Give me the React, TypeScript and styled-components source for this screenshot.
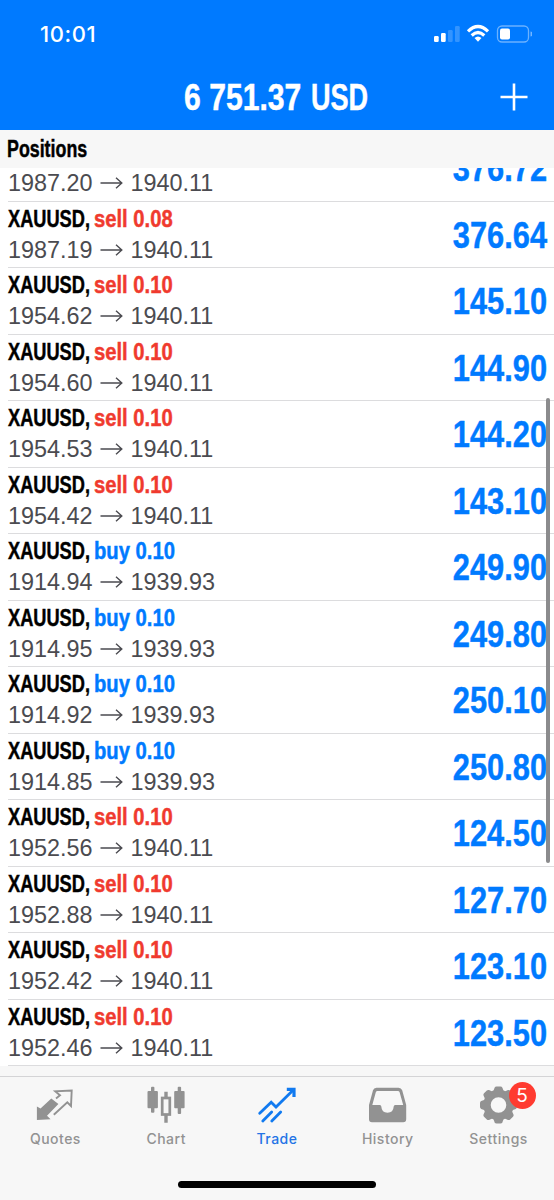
import React from "react";
import styled, { createGlobalStyle } from "styled-components";

const BLUE = "#007aff";
const RED = "#f03a2e";
const GREY = "#929292";

const GlobalStyle = createGlobalStyle`
  * { box-sizing: border-box; }
  body { margin: 0; background: #fff; }
`;

const Screen = styled.div`
  width: 554px;
  height: 1200px;
  display: flex;
  flex-direction: column;
  overflow: hidden;
  background: #fff;
`;

const Header = styled.header`
  height: 130px;
  flex: none;
  background: ${BLUE};
  color: #fff;
`;

const StatusBar = styled.div`
  height: 66px;
  display: flex;
  justify-content: space-between;
  padding: 22px 22px 0 40px;
`;

const Clock = styled.span`
  font: 500 22px/25px Inter, sans-serif;
  letter-spacing: 0.6px;
`;

const StatusIcons = styled.svg`
  display: block;
  margin-top: 2px;
`;

/* Bold sans text squeezed horizontally; $width is the room kept for it in the flow. */
const Condensed = styled.span<{ $scale: number; $width: number; $origin?: string }>`
  display: block;
  width: ${(p) => p.$width}px;
  direction: ${(p) => (p.$origin === "right" ? "rtl" : "ltr")};
  font-family: "Liberation Sans", sans-serif;
  font-weight: 700;
  white-space: nowrap;
  transform: scaleX(${(p) => p.$scale});
  transform-origin: ${(p) => p.$origin ?? "left"} center;
  -webkit-text-stroke: 0.45px currentColor;
`;

const TitleBar = styled.div`
  height: 64px;
  display: grid;
  grid-template-columns: 60px 1fr 60px;
  align-items: center;
  padding: 0 10px;
`;

const Balance = styled.h1`
  grid-column: 2;
  display: flex;
  justify-content: center;
  margin: 0;
  font-size: 36px;
  line-height: 64px;
`;

const AddButton = styled.button`
  display: flex;
  justify-content: center;
  padding: 0 0 2px;
  border: 0;
  background: none;
`;

const SectionTitle = styled.h2`
  height: 38px;
  flex: none;
  margin: 0;
  padding-left: 7px;
  background: #f7f7f7;
  color: #000;
  font-size: 23.5px;
  line-height: 38px;
`;

const Viewport = styled.main`
  position: relative;
  height: 908px;
  flex: none;
  overflow: hidden;
`;

const List = styled.div`
  margin-top: -33px;
`;

const Row = styled.div`
  height: 66.5px;
  margin-left: 8px;
  padding-right: 7px;
  display: flex;
  justify-content: space-between;
  border-bottom: 1px solid #dcdcde;
`;

const Details = styled.div`
  padding-top: 2px;
`;

const Order = styled.div<{ $side: string }>`
  display: flex;
  color: ${(p) => (p.$side === "buy" ? BLUE : RED)};
  font-size: 23.5px;
  line-height: 30px;
`;

const Prices = styled.div`
  display: flex;
  align-items: center;
  color: #4b4b50;
  font: 400 23.4px/32px "Liberation Sans", sans-serif;
`;

const ArrowIcon = styled.svg`
  margin: 0 8px 0 7px;
`;

const Profit = styled.div`
  color: ${BLUE};
  font-size: 36px;
  line-height: 67px;
`;

const NextSection = styled.div`
  height: 12px;
  background: #f7f7f7;
`;

const ScrollThumb = styled.div`
  position: absolute;
  right: 4px;
  top: 230px;
  width: 4px;
  height: 465px;
  border-radius: 2px;
  background: #8b8b8d;
`;

const TabBar = styled.nav`
  height: 124px;
  flex: none;
  display: flex;
  flex-direction: column;
  align-items: center;
  background: #f7f7f7;
  border-top: 1px solid #d4d4d6;
`;

const Tabs = styled.div`
  width: 100%;
  height: 104px;
  display: grid;
  grid-template-columns: repeat(5, 1fr);
`;

const Tab = styled.div<{ $active?: boolean }>`
  display: flex;
  flex-direction: column;
  align-items: center;
  padding-top: 8px;
  color: ${(p) => (p.$active ? "#2474e6" : GREY)};
  font: 500 14px/20px Inter, sans-serif;
  letter-spacing: 0.5px;
`;

const IconBox = styled.div`
  position: relative;
  width: 40px;
  height: 40px;
  margin-bottom: 4px;

  svg { display: block; }
`;

const Badge = styled.span`
  position: absolute;
  left: 30px;
  top: -3.5px;
  width: 27px;
  height: 27px;
  border-radius: 50%;
  background: #ff3b30;
  color: #fff;
  text-align: center;
  font: 400 19px/27px Inter, sans-serif;
  letter-spacing: 0;
`;

const HomeIndicator = styled.div`
  width: 198px;
  height: 7px;
  border-radius: 4px;
  background: #000;
`;

const positions = [
  ["sell 0.08", "1987.20", "1940.11", "376.72"],
  ["sell 0.08", "1987.19", "1940.11", "376.64"],
  ["sell 0.10", "1954.62", "1940.11", "145.10"],
  ["sell 0.10", "1954.60", "1940.11", "144.90"],
  ["sell 0.10", "1954.53", "1940.11", "144.20"],
  ["sell 0.10", "1954.42", "1940.11", "143.10"],
  ["buy 0.10", "1914.94", "1939.93", "249.90"],
  ["buy 0.10", "1914.95", "1939.93", "249.80"],
  ["buy 0.10", "1914.92", "1939.93", "250.10"],
  ["buy 0.10", "1914.85", "1939.93", "250.80"],
  ["sell 0.10", "1952.56", "1940.11", "124.50"],
  ["sell 0.10", "1952.88", "1940.11", "127.70"],
  ["sell 0.10", "1952.42", "1940.11", "123.10"],
  ["sell 0.10", "1952.46", "1940.11", "123.50"],
];

const QuotesIcon = () => (
  <svg width="40" height="40" viewBox="0 0 40 40">
    <path d="M1.900 35V21.500L5.500 23.500 16.300 13.500 23.400 19 12 30.800 15.600 34.300Z" fill={GREY} />
    <path d="M21 13.500 25 10.200 20.300 6.400 36.700 5.500 36 21 32.300 17.300 18.800 29.800" fill="none" stroke={GREY} strokeWidth="1.900" />
  </svg>
);

const ChartIcon = () => (
  <svg width="40" height="40" viewBox="0 0 40 40" fill={GREY}>
    <rect x="1.500" y="6" width="10.400" height="17.300" rx="1" />
    <rect x="5" y="1.700" width="3.400" height="26" rx="1" />
    <rect x="28.200" y="6" width="10.400" height="17.300" rx="1" />
    <rect x="31.700" y="1.700" width="3.400" height="27.300" rx="1" />
    <path d="M20 6.700v5.500M20 30v7.700" stroke={GREY} strokeWidth="3.400" />
    <rect x="16.200" y="13" width="7.600" height="16.500" fill="none" stroke={GREY} strokeWidth="2.700" />
  </svg>
);

const TradeIcon = () => (
  <svg width="40" height="40" viewBox="0 0 40 40" fill="none" stroke="#117af0" strokeWidth="2.800">
    <path d="M2.700 28.200 14.200 17.300 19 22 36.500 4.800" strokeLinecap="round" />
    <path d="M29.800 4.300H37V12" strokeWidth="3.200" />
    <path d="M5.800 36 14.700 27M14.800 36 23.700 27" strokeLinecap="round" />
  </svg>
);

const HistoryIcon = () => (
  <svg width="40" height="40" viewBox="0 0 40 40">
    <path
      fill={GREY}
      fillRule="evenodd"
      d="M8.500 2.700H30.500Q33.300 2.700 34.200 5.200L38.200 20V34.300Q38.200 37.300 35.200 37.300H4Q1 37.300 1 34.300V20L5 5.200Q5.800 2.700 8.500 2.700ZM9.500 5.900Q8.200 5.900 7.800 7.200L4.300 20H11.800Q13.300 20 13.300 21.500 13.700 27.700 19.500 27.700 25.300 27.700 25.700 21.500 25.700 20 27.200 20H35.200L31.600 7.200Q31.200 5.900 29.900 5.900Z"
    />
  </svg>
);

const SettingsIcon = () => (
  <svg width="40" height="40" viewBox="0 0 40 40">
    <g fill={GREY} transform="translate(19.500 20)">
      <path
        fillRule="evenodd"
        d="M0-15.200A15.200 15.200 0 1 1 0 15.200A15.200 15.200 0 1 1 0-15.200ZM0-7.800A7.800 7.800 0 1 0 0 7.800A7.800 7.800 0 1 0 0-7.800Z"
      />
      {[0, 45, 90, 135, 180, 225, 270, 315].map((a) => (
        <path key={a} transform={`rotate(${a})`} d="M-5.500-13-3.900-17.300Q-3.300-18.500-2-18.500H2Q3.300-18.500 3.900-17.300L5.500-13Z" />
      ))}
    </g>
  </svg>
);

const Instrument = styled.div`
  color: #000;
`;

export default function App() {
  return (
    <Screen>
      <GlobalStyle />
      <Header>
        <StatusBar>
          <Clock>10:01</Clock>
          <StatusIcons width="100" height="20" viewBox="432 24 100 20" fill="#fff">
            <rect x="434" y="36" width="4.700" height="6" rx="1.200" />
            <rect x="441" y="33" width="4.700" height="9" rx="1.200" />
            <rect x="448" y="30" width="4.700" height="12" rx="1.200" opacity="0.200" />
            <rect x="455" y="26" width="4.700" height="16" rx="1.200" opacity="0.200" />
            <g fill="none" stroke="#fff" strokeWidth="3.200">
              <path d="M468 31.300Q478 21.700 488 31.300" />
              <path d="M471.700 35.500Q478 29.500 484.300 35.500" />
            </g>
            <path d="M474.500 38Q478 35 481.500 38L478 41.800Z" />
            <rect x="497.500" y="26" width="31" height="16" rx="4.500" fill="none" stroke="#fff" strokeOpacity="0.420" strokeWidth="1.300" />
            <rect x="500" y="28.500" width="10" height="11" rx="2" />
            <path d="M530.500 31.500Q533 32 533 34T530.500 36.500Z" opacity="0.450" />
          </StatusIcons>
        </StatusBar>
        <TitleBar>
          <Balance>
            <Condensed $scale={0.837} $width={127}>6 751.37</Condensed>
            <Condensed $scale={0.752} $width={59}>USD</Condensed>
          </Balance>
          <AddButton aria-label="Add">
            <svg width="28" height="28" viewBox="0 0 28 28" stroke="#fff" strokeWidth="2.600">
              <path d="M14 0.500V27.500M0.500 14H27.500" />
            </svg>
          </AddButton>
        </TitleBar>
      </Header>
      <SectionTitle>
        <Condensed $scale={0.758} $width={106}>Positions</Condensed>
      </SectionTitle>
      <Viewport>
        <List>
          {positions.map(([order, open, current, profit]) => (
            <Row key={open}>
              <Details>
                <Order $side={order.split(" ")[0]}>
                  <Instrument>
                    <Condensed $scale={0.775} $width={86}>XAUUSD,</Condensed>
                  </Instrument>
                  <Condensed $scale={0.86} $width={96}>{order}</Condensed>
                </Order>
                <Prices>
                  {open}
                  <ArrowIcon width="23" height="14" viewBox="0 0 23 14" fill="none" stroke="#4b4b50" strokeWidth="1.400">
                    <path d="M0.500 7H21.500M16 1.700 21.800 7 16 12.300" />
                  </ArrowIcon>
                  {current}
                </Prices>
              </Details>
              <Profit>
                <Condensed $scale={0.855} $width={110} $origin="right">{profit}</Condensed>
              </Profit>
            </Row>
          ))}
          <NextSection />
        </List>
        <ScrollThumb />
      </Viewport>
      <TabBar>
        <Tabs>
          <Tab><IconBox><QuotesIcon /></IconBox>Quotes</Tab>
          <Tab><IconBox><ChartIcon /></IconBox>Chart</Tab>
          <Tab $active><IconBox><TradeIcon /></IconBox>Trade</Tab>
          <Tab><IconBox><HistoryIcon /></IconBox>History</Tab>
          <Tab><IconBox><SettingsIcon /><Badge>5</Badge></IconBox>Settings</Tab>
        </Tabs>
        <HomeIndicator />
      </TabBar>
    </Screen>
  );
}
